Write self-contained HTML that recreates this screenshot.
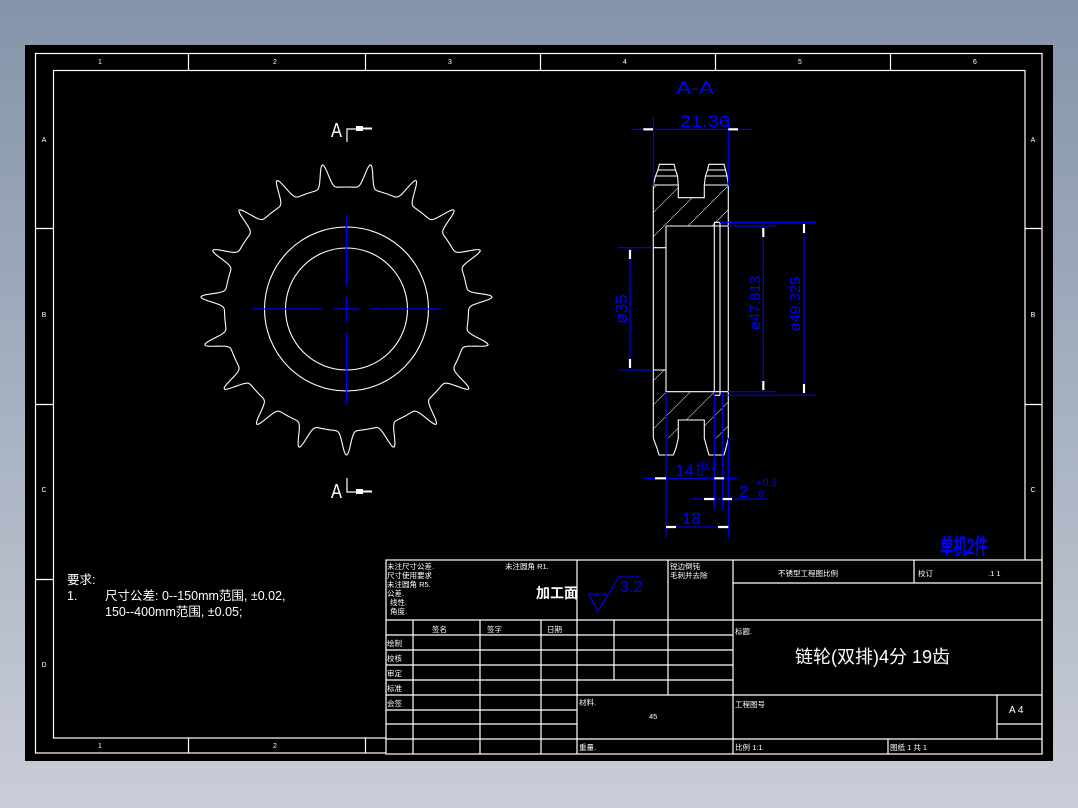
<!DOCTYPE html>
<html><head><meta charset="utf-8"><style>
html,body{margin:0;padding:0;width:1078px;height:808px;overflow:hidden}
text{font-family:"Liberation Sans","Noto Sans CJK SC",sans-serif}
</style></head><body>
<svg width="1078" height="808" viewBox="0 0 1078 808" xmlns="http://www.w3.org/2000/svg">
<defs>
<linearGradient id="bg" x1="0" y1="0" x2="0" y2="1"><stop offset="0" stop-color="#8494aa"/><stop offset="1" stop-color="#c9cdd7"/></linearGradient>
<pattern id="hatch" width="17" height="17" patternUnits="userSpaceOnUse" patternTransform="rotate(45)"><line x1="0" y1="0" x2="0" y2="17" stroke="#fff" stroke-width="1"/></pattern>
</defs>
<rect width="1078" height="808" fill="url(#bg)"/>
<rect x="25" y="45" width="1028" height="716" fill="#000"/>
<g stroke="#fff" fill="none" stroke-width="1.2">
<rect x="35.5" y="53.5" width="1006.5" height="699.5"/>
<rect x="53.5" y="70.5" width="971.5" height="667.5"/>
<path d="M188.5 53v17M365.5 53v17M540.5 53v17M715.5 53v17M890.5 53v17"/>
<path d="M188.5 738v15M365.5 738v15"/>
<path d="M35 228.5h18M35 404.5h18M35 579.5h18M1025 228.5h17M1025 404.5h17M1025 579.5h17"/>
</g>
<g fill="#fff" font-size="7" text-anchor="middle">
<text x="100" y="64">1</text><text x="275" y="64">2</text><text x="450" y="64">3</text><text x="625" y="64">4</text><text x="800" y="64">5</text><text x="975" y="64">6</text>
<text x="100" y="748">1</text><text x="275" y="748">2</text>
<text x="44" y="142">A</text><text x="44" y="317">B</text><text x="44" y="492">C</text><text x="44" y="667">D</text>
<text x="1033" y="142">A</text><text x="1033" y="317">B</text><text x="1033" y="492">C</text><text x="1033" y="667">D</text>
</g>

<path id="gear" stroke="#fff" fill="none" stroke-width="1.1" d=""/>
<circle cx="346.5" cy="309" r="82" stroke="#fff" fill="none" stroke-width="1.1"/>
<circle cx="346.5" cy="309" r="61" stroke="#fff" fill="none" stroke-width="1.1"/>
<g stroke="#00f" stroke-width="1.3">
<path d="M252 309h70M334 309h25M371 309h70"/>
<path d="M346.5 215v70M346.5 297v24M346.5 333v70"/>
</g>
<g fill="#fff" font-size="20">
<text x="331" y="137" textLength="11" lengthAdjust="spacingAndGlyphs">A</text>
<text x="331" y="498" textLength="11" lengthAdjust="spacingAndGlyphs">A</text>
</g>
<g stroke="#fff" fill="none" stroke-width="1.2">
<path d="M347 142v-13h10M347 478v14h10"/>
</g>
<g fill="#fff"><rect x="356" y="126" width="7" height="5"/><rect x="363" y="127.5" width="9" height="2"/><rect x="356" y="489" width="7" height="5"/><rect x="363" y="490.5" width="9" height="2"/></g>

<path d="M653.3 185H728.3V226H666V248H653.3Z M653.3 370H666V391.7H728.3V438.3H653.3Z" fill="url(#hatch)"/>
<rect x="678.3" y="185" width="26" height="12.7" fill="#000"/>
<rect x="678.3" y="420" width="26" height="18.3" fill="#000"/>
<g stroke="#fff" fill="none" stroke-width="1.1">
<path d="M653.3 185L655.5 176L658 170L659.3 164.3H674L675.5 170L677.5 176L678.3 185V197.7H704.3V185L705.5 176L707.5 170L709 164.3H724L725.5 170L727 176L728.3 185"/>
<path d="M653.3 185H678.3M704.3 185H728.3M655.5 176H677.5M705.5 176H727M658 170H675.5M707.5 170H725.5"/>
<path d="M653.3 185V438.3M728.3 185V438.3"/>
<path d="M653.3 438.3L657 448L659 455H673.3L676 448L678.3 438.3V420H704.3V438.3L707 448L709 455H724L726 448L728.3 438.3"/>
<path d="M666 226H728.3M666 391.7H728.3M666 226V391.7M653.3 247.7H666M653.3 370H666"/>
<rect x="714.3" y="222.3" width="5.7" height="173"/>
</g>
<g stroke="#00f" fill="none" stroke-width="1.1">
<path d="M631 129.3H752M653.3 117V186M728.3 117V186"/>
<path d="M630 248V370M618 247.7H653M618 370H653"/>
<path d="M728 226H776M728 391.7H776M763.3 226V391.7"/>
<path d="M720 222.3H816M720 395.3H816M804 222.3V395.3"/>
<path d="M666 392V538M728.3 438V538M714.3 392V510M722.7 392V510"/>
<path d="M643.3 478.3H737M692 499H768M666 527H728.3"/>
</g>
<g stroke="#fff" stroke-width="2.2">
<path d="M643.3 129.3H653M728.3 129.3H738M630 250V259M630 359V368M763.3 228V237M763.3 381V390M804 224V233M804 384V393M655 478.3H666M714.3 478.3H724M704 499H714.3M722.7 499H732M666 527H676M718 527H728.3"/>
</g>
<g fill="#00f">
<text x="676" y="94" font-size="18" textLength="38" lengthAdjust="spacingAndGlyphs">A-A</text>
<text x="680" y="127" font-size="17" textLength="50" lengthAdjust="spacingAndGlyphs">21.36</text>
<text transform="translate(627,309) rotate(-90)" font-size="17" text-anchor="middle">ø35</text>
<text transform="translate(760,303) rotate(-90)" font-size="15" text-anchor="middle">ø47.813</text>
<text transform="translate(800,304) rotate(-90)" font-size="15" text-anchor="middle">ø49.325</text>
<text x="675" y="476" font-size="17">14</text><text x="695" y="469" font-size="11">+0.1</text><text x="697" y="476" font-size="11">0</text>
<text x="739" y="497" font-size="17">2</text><text x="756" y="486" font-size="11">+0.1</text><text x="758" y="497" font-size="11">0</text>
<text x="682" y="524" font-size="17">18</text>
</g>
<text x="940" y="554" fill="#00f" font-size="22" font-weight="bold" textLength="48" lengthAdjust="spacingAndGlyphs">单机2件</text>

<g fill="#fff" font-size="12.5">
<text x="67" y="584">要求:</text>
<text x="67" y="600">1.</text>
<text x="105" y="600">尺寸公差: 0--150mm范围,  ±0.02,</text>
<text x="105" y="616">150--400mm范围,  ±0.05;</text>
</g>

<g stroke="#fff" fill="none" stroke-width="1.2">
<rect x="386" y="560" width="656" height="194" fill="#000"/>
<path d="M386 620H1042M733 583H1042M733 695H1042M386 739H1042M997 724H1042M997 695V739"/>
<path d="M386 635H733M386 650H733M386 665H733M386 680H733M386 695H733M386 710H577M386 724H577"/>
<path d="M577 560V620M668 560V620M733 560V754M914 560V583"/>
<path d="M413 620V754M480 620V754M541 620V754M577 620V754M614 620V680M668 620V695M888 739V754"/>
</g>
<g fill="#fff" font-size="7.5">
<text x="387" y="569">未注尺寸公差.</text><text x="387" y="578">尺寸使用要求</text><text x="387" y="587">未注圆角 R5.</text><text x="387" y="596">公差.</text><text x="390" y="605">线性.</text><text x="390" y="614">角度.</text>
<text x="505" y="569">未注圆角 R1.</text>
<text x="670" y="569">锐边倒钝</text><text x="670" y="578">毛刺并去除</text>
<text x="778" y="576">不锈型工程图比例</text><text x="918" y="576">校订</text><text x="988" y="576">.1 1</text>
<text x="432" y="632">签名</text><text x="487" y="632">签字</text><text x="547" y="632">日期</text>
<text x="387" y="646">绘制</text><text x="387" y="661">校核</text><text x="387" y="676">审定</text><text x="387" y="691">标准</text><text x="387" y="706">会签</text>
<text x="579" y="705">材料.</text><text x="649" y="719">45</text><text x="579" y="750">重量.</text>
<text x="735" y="634">标题.</text><text x="735" y="707">工程图号</text><text x="735" y="750">比例 1:1</text><text x="890" y="750">图纸 1 共 1</text>
<text x="1009" y="713" font-size="10">A 4</text>
</g>
<text x="536" y="598" fill="#fff" font-size="14" font-weight="bold">加工面</text>
<path d="M588.5 594H606.5M588.5 594L598 611L618.5 577H640.7" stroke="#00f" fill="none" stroke-width="1.1"/>
<text x="620" y="592" fill="#00f" font-size="16">3.2</text>
<text x="795" y="663" fill="#fff" font-size="18">链轮(双排)4分 19齿</text>

<script>
(function(){
var cx=346.5,cy=309,N=19,d='';
for(var i=0;i<=1900;i++){
 var a=i/1900*2*Math.PI;
 var rel=(a-Math.PI/2)/(2*Math.PI/N);
 var u=rel-Math.round(rel);
 var r=122+24*Math.exp(-Math.pow(u/0.12,2));
 var x=cx+r*Math.cos(a),y=cy+r*Math.sin(a);
 d+=(i?'L':'M')+x.toFixed(2)+' '+y.toFixed(2);
}
document.getElementById('gear').setAttribute('d',d+'Z');
})();
</script>
</svg>
</body></html>
